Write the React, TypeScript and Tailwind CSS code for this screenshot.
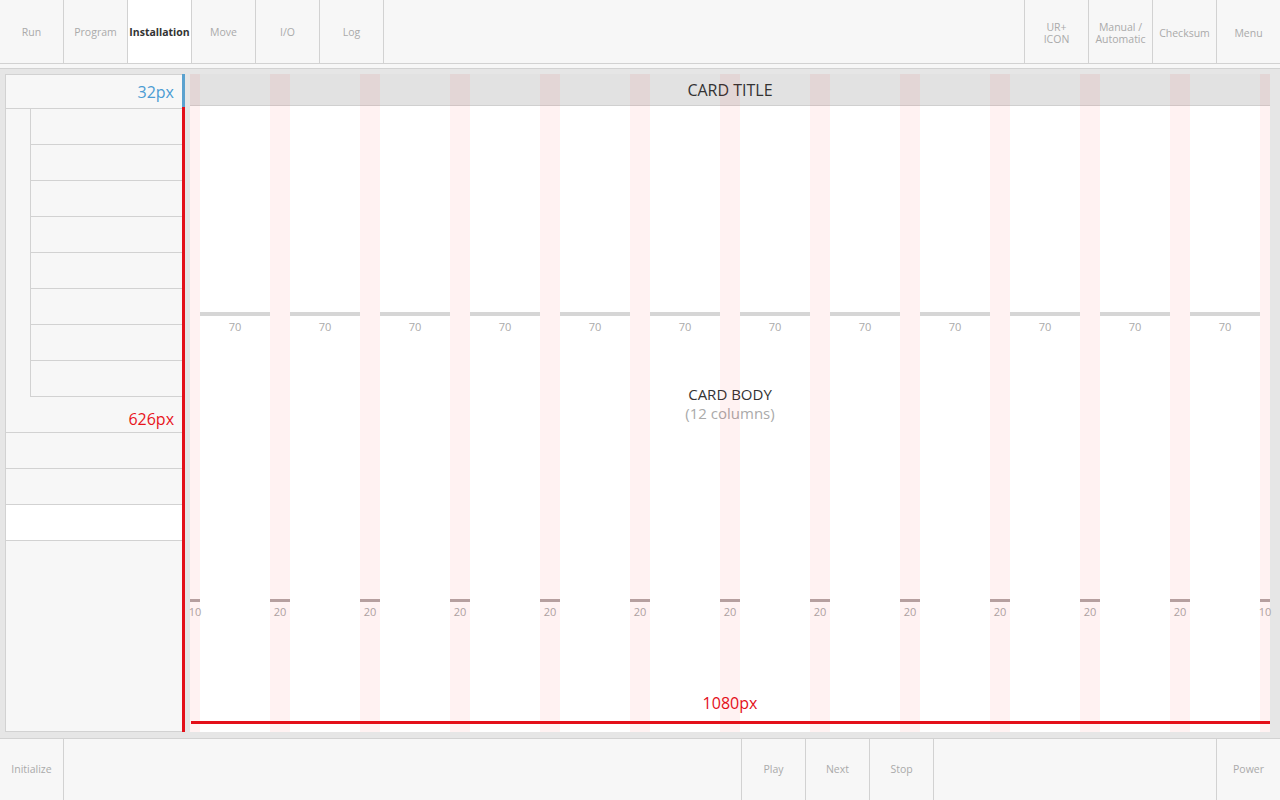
import React from 'react';

const leftTabs = ['Run', 'Program', 'Installation', 'Move', 'I/O', 'Log'];
const rightTabs = [['UR+', 'ICON'], ['Manual /', 'Automatic'], ['Checksum'], ['Menu']];

// 10 | 70 | 20 | 70 ... 70 | 10
const gutters = [10, 20, 20, 20, 20, 20, 20, 20, 20, 20, 20, 20, 10];

const TopTab = ({ label, active }: { label: string; active?: boolean }) => (
    <div
        className={`w-16 h-full shrink-0 border-r border-[#d2d2d2] flex items-center justify-center pt-[2px] text-[10.5px] ${
            active ? 'bg-white font-bold text-[#333]' : 'text-[#aaa]'
        }`}
    >
        {label}
    </div>
);

const App = () => {
    return (
        <div className="w-[1280px] h-[800px] flex flex-col bg-[#e6e6e6] font-['Open_Sans',sans-serif] overflow-hidden">
            {/* header */}
            <div className="h-[69px] shrink-0 bg-[#f7f7f7] border-b border-[#d2d2d2]">
                <div className="h-16 flex border-b border-[#d2d2d2]">
                    {leftTabs.map((t) => (
                        <TopTab key={t} label={t} active={t === 'Installation'} />
                    ))}
                    <div className="flex-1" />
                    {rightTabs.map((lines) => (
                        <div
                            key={lines.join()}
                            className="w-16 h-full border-l border-[#d2d2d2] flex flex-col items-center justify-center pt-[2px] text-[10.5px] leading-[12px] text-[#aaa]"
                        >
                            {lines.map((l) => (
                                <span key={l}>{l}</span>
                            ))}
                        </div>
                    ))}
                </div>
            </div>

            {/* main */}
            <div className="flex-1 flex pt-[5px] pb-[6px] pl-[5px] pr-[10px] min-h-0">
                {/* side panel */}
                <div className="w-[177px] shrink-0 bg-[#f7f7f7] border border-[#d2d2d2] border-r-0 flex flex-col">
                    <div className="h-[34px] shrink-0 border-b border-[#d2d2d2] flex items-center justify-end pr-2 text-[16px] text-[#4b9cd3]">
                        32px
                    </div>
                    <div className="pl-[24px] flex flex-col">
                        {Array.from({ length: 8 }).map((_, i) => (
                            <div key={i} className="h-9 border-l border-b border-[#d2d2d2] bg-[#f7f7f7]" />
                        ))}
                    </div>
                    <div className="h-9 border-b border-[#d2d2d2] flex justify-end pr-2 pt-[12px] text-[16px] leading-5 text-[#e8141c]">
                        626px
                    </div>
                    <div className="h-9 border-b border-[#d2d2d2]" />
                    <div className="h-9 border-b border-[#d2d2d2]" />
                    <div className="h-9 border-b border-[#d2d2d2] bg-white" />
                </div>

                {/* measure line */}
                <div className="w-[3px] shrink-0 flex flex-col">
                    <div className="h-[33px] bg-[#5aa2cf]" />
                    <div className="flex-1 bg-[#e3101a]" />
                </div>

                {/* card */}
                <div className="ml-[5px] w-[1080px] shrink-0 relative bg-white flex flex-col">
                    <div className="h-8 shrink-0 bg-[#e2e2e2] border-b border-[#d0d0d0] flex items-center justify-center text-[16px] text-[#333]">
                        CARD TITLE
                    </div>
                    <div className="flex-1 flex flex-col px-[10px]">
                        <div className="mt-[206px] grid grid-cols-12 gap-x-5">
                            {Array.from({ length: 12 }).map((_, i) => (
                                <div key={i} className="flex flex-col items-center">
                                    <div className="h-1 w-full bg-[#d6d6d6]" />
                                    <span className="mt-[4px] text-[11px] leading-[14px] text-[#aaa]">70</span>
                                </div>
                            ))}
                        </div>
                        <div className="mt-[51px] flex flex-col items-center text-[15px] leading-[19px]">
                            <span className="text-[#333]">CARD BODY</span>
                            <span className="text-[#aaa]">(12 columns)</span>
                        </div>
                        <div className="mt-[176px] -mx-[10px] flex">
                            {gutters.map((w, i) => (
                                <React.Fragment key={i}>
                                    {i > 0 && <div className="w-[70px] shrink-0" />}
                                    <div className="shrink-0 flex flex-col items-center" style={{ width: w }}>
                                        <div className="h-[3px] w-full bg-[#b3a8a8]" />
                                        <span className="mt-[3px] text-[11px] leading-[14px] text-[#aaa] whitespace-nowrap">
                                            {w}
                                        </span>
                                    </div>
                                </React.Fragment>
                            ))}
                        </div>
                        <div className="mt-[75px] text-center text-[16px] leading-[19px] text-[#e3101a]">1080px</div>
                        <div className="mt-[8px] -mr-[10px] -ml-[9px] h-[3px] bg-[#e3101a]" />
                    </div>

                    {/* gutter overlay */}
                    <div className="absolute inset-0 flex pointer-events-none">
                        {gutters.map((w, i) => (
                            <React.Fragment key={i}>
                                {i > 0 && <div className="w-[70px] shrink-0" />}
                                <div className="shrink-0 bg-[rgba(255,0,0,0.05)]" style={{ width: w }} />
                            </React.Fragment>
                        ))}
                    </div>
                </div>
            </div>

            {/* footer */}
            <div className="h-[62px] shrink-0 bg-[#f7f7f7] border-t border-[#d2d2d2] flex text-[10.5px] text-[#aaa]">
                <div className="w-16 border-r border-[#d2d2d2] flex items-center justify-center">Initialize</div>
                <div className="w-[677px]" />
                {['Play', 'Next', 'Stop'].map((t) => (
                    <div key={t} className="w-16 border-l border-[#d2d2d2] flex items-center justify-center">
                        {t}
                    </div>
                ))}
                <div className="flex-1 border-l border-[#d2d2d2]" />
                <div className="w-16 border-l border-[#d2d2d2] flex items-center justify-center">Power</div>
            </div>
        </div>
    );
};

export default App;
